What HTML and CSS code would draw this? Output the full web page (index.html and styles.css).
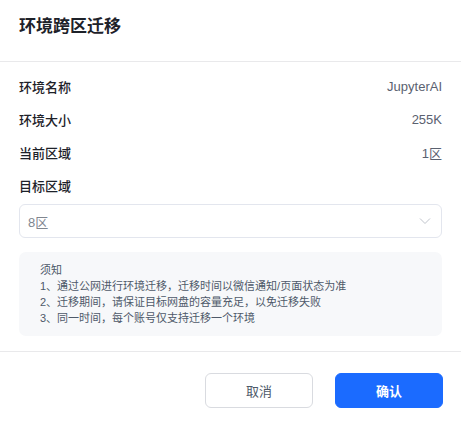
FILE: index.html
```html
<!DOCTYPE html>
<html lang="zh">
<head>
<meta charset="utf-8">
<link rel="stylesheet" href="styles.css">
</head>
<body>
<div class="dialog">
  <div class="header"><h1 class="title">环境跨区迁移</h1></div>
  <div class="body">
    <div class="row"><span class="label">环境名称</span><span class="value">JupyterAI</span></div>
    <div class="row"><span class="label">环境大小</span><span class="value">255K</span></div>
    <div class="row"><span class="label">当前区域</span><span class="value">1区</span></div>
    <div class="row"><span class="label">目标区域</span></div>
    <div class="select">
      <span class="select-text">8区</span>
      <svg class="chev" width="12" height="8" viewBox="0 0 12 8"><path d="M1 1.5 L6 6.5 L11 1.5" fill="none" stroke="#c0c4cc" stroke-width="1"/></svg>
    </div>
    <div class="notice">
      <div>须知</div>
      <div>1、通过公网进行环境迁移，迁移时间以微信通知/页面状态为准</div>
      <div>2、迁移期间，请保证目标网盘的容量充足，以免迁移失败</div>
      <div>3、同一时间，每个账号仅支持迁移一个环境</div>
    </div>
  </div>
  <div class="footer">
    <button class="btn btn-cancel">取消</button>
    <button class="btn btn-ok">确认</button>
  </div>
</div>
</body>
</html>
```
FILE: styles.css
```css
html, body { margin: 0; padding: 0; background: #fff; }
body { font-family: "Liberation Sans", "Noto Sans CJK SC", sans-serif; color: #1d2129; }
.dialog { width: 461px; height: 421px; box-sizing: border-box; }
.header { height: 62px; box-sizing: border-box; padding: 16px 19px 0; border-bottom: 1px solid #e9e9eb; }
.title { margin: 0; font-size: 17px; font-weight: 700; line-height: 22px; color: #1d2129; }
.body { padding: 8px 19px 15px 19px; border-bottom: 1px solid #e9e9eb; }
.row { display: flex; justify-content: space-between; align-items: center; height: 33px; font-size: 13px; }
.label { font-weight: 500; color: #1d2129; }
.value { color: #5a6170; }
.select { margin-top: 2px; height: 34px; box-sizing: border-box; border: 1px solid #e3e6ee; border-radius: 6px; display: flex; align-items: center; justify-content: space-between; padding: 0 10px 0 8px; }
.select-text { font-size: 13px; color: #80868f; }
.notice { margin-top: 14px; background: #f7f8fa; border-radius: 7px; padding: 10px 21px 10px 21px; font-size: 11px; line-height: 16px; color: #4e5969; }
.footer { display: flex; justify-content: flex-end; gap: 22px; padding: 21px 18px 0; }
.btn { height: 35px; width: 108px; border-radius: 6px; font-family: "Liberation Sans", "Noto Sans CJK SC", sans-serif; font-size: 13px; cursor: pointer; }
.btn-cancel { background: #fff; border: 1px solid #d9dbe0; color: #4e5969; }
.btn-ok { background: #1b6bff; border: 1px solid #1b6bff; color: #fff; font-weight: 600; }
```
